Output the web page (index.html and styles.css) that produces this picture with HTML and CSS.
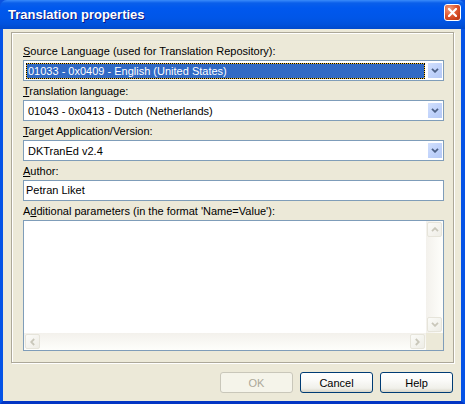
FILE: index.html
```html
<!DOCTYPE html>
<html>
<head>
<meta charset="utf-8">
<link rel="stylesheet" href="styles.css">
</head>
<body>
<div class="window">
  <div class="titlebar">
    <span class="title">Translation properties</span>
    <span class="close">
      <svg width="9" height="9" viewBox="0 0 9 9"><path d="M1 1 L8 8 M8 1 L1 8" stroke="#fff" stroke-width="2.2" stroke-linecap="square"/></svg>
    </span>
  </div>
  <div class="frame">
    <div class="group">
      <div class="label"><u>S</u>ource Language (used for Translation Repository):</div>
      <div class="combo">
        <div class="value"><span class="sel">01033 - 0x0409 - English (United States)</span></div>
        <div class="drop"><svg width="8" height="5" viewBox="0 0 8 5"><path d="M1 0.8 L4 3.8 L7 0.8" fill="none" stroke="#4d6185" stroke-width="1.8"/></svg></div>
      </div>
      <div class="label"><u>T</u>ranslation language:</div>
      <div class="combo">
        <div class="value"><span class="plain">01043 - 0x0413 - Dutch (Netherlands)</span></div>
        <div class="drop"><svg width="8" height="5" viewBox="0 0 8 5"><path d="M1 0.8 L4 3.8 L7 0.8" fill="none" stroke="#4d6185" stroke-width="1.8"/></svg></div>
      </div>
      <div class="label"><u>T</u>arget Application/Version:</div>
      <div class="combo">
        <div class="value"><span class="plain">DKTranEd v2.4</span></div>
        <div class="drop"><svg width="8" height="5" viewBox="0 0 8 5"><path d="M1 0.8 L4 3.8 L7 0.8" fill="none" stroke="#4d6185" stroke-width="1.8"/></svg></div>
      </div>
      <div class="label"><u>A</u>uthor:</div>
      <div class="textbox">Petran Liket</div>
      <div class="label">A<u>d</u>ditional parameters (in the format 'Name=Value'):</div>
      <div class="memo">
        <div class="memo-area"></div>
        <div class="vbar">
          <div class="sbtn"><svg width="8" height="5" viewBox="0 0 8 5"><path d="M1 4.2 L4 1.2 L7 4.2" fill="none" stroke="#c9c7ba" stroke-width="1.8"/></svg></div>
          <div class="vtrack"></div>
          <div class="sbtn"><svg width="8" height="5" viewBox="0 0 8 5"><path d="M1 0.8 L4 3.8 L7 0.8" fill="none" stroke="#c9c7ba" stroke-width="1.8"/></svg></div>
        </div>
        <div class="hbar">
          <div class="sbtn"><svg width="5" height="8" viewBox="0 0 5 8"><path d="M4.2 1 L1.2 4 L4.2 7" fill="none" stroke="#c9c7ba" stroke-width="1.8"/></svg></div>
          <div class="htrack"></div>
          <div class="sbtn"><svg width="5" height="8" viewBox="0 0 5 8"><path d="M0.8 1 L3.8 4 L0.8 7" fill="none" stroke="#c9c7ba" stroke-width="1.8"/></svg></div>
        </div>
        <div class="corner"></div>
      </div>
    </div>
    <div class="buttons">
      <div class="btn disabled">OK</div>
      <div class="btn">Cancel</div>
      <div class="btn">Help</div>
    </div>
  </div>
</div>
</body>
</html>
```
FILE: styles.css
```css
html, body {
  margin: 0;
  padding: 0;
  background: #ffffff;
}
body {
  font-family: "Liberation Sans", Arial, sans-serif;
  font-size: 11px;
  color: #000;
}
.window {
  width: 465px;
  height: 404px;
  display: flex;
  flex-direction: column;
  background: #0a52e0;
}
.titlebar {
  height: 29px;
  box-sizing: border-box;
  display: flex;
  align-items: center;
  justify-content: space-between;
  padding: 0 4px 0 8px;
  border-radius: 7px 7px 0 0;
  background: linear-gradient(#3a8cf8 0, #2a7cf6 1px, #0a5fea 3px, #0058ee 8px, #0056e8 18px, #0052dd 24px, #0049cc 29px);
}
.title {
  color: #fff;
  font-family: "Liberation Sans", Arial, sans-serif;
  font-weight: bold;
  font-size: 13px;
  text-shadow: 1px 1px 0 #0a1883;
  margin-top: -1px;
}
.close {
  width: 17px;
  height: 17px;
  box-sizing: border-box;
  border: 1px solid #fff;
  border-radius: 3px;
  display: flex;
  align-items: center;
  justify-content: center;
  background: radial-gradient(circle at 30% 25%, #f09b7c 0, #e05a32 45%, #c9401b 75%, #b83812 100%);
  margin-top: -4px;
}
.frame {
  flex: 1;
  display: flex;
  flex-direction: column;
  background: #ece9d8;
  border-left: 3px solid #0553e6;
  border-right: 4px solid #0553e6;
  border-bottom: 3px solid #0335c4;
}
.group {
  margin: 3px 7px 0 8px;
  height: 331px;
  box-sizing: border-box;
  border: 1px solid #aca899;
  box-shadow: inset 1px 1px 0 #fff, 1px 1px 0 #fff;
  padding: 12px 9px 0 11px;
  display: flex;
  flex-direction: column;
}
.label {
  height: 13px;
  line-height: 13px;
  margin-bottom: 2px;
  white-space: nowrap;
}
.combo, .textbox {
  height: 21px;
  box-sizing: border-box;
  border: 1px solid #7f9db9;
  background: #fff;
  margin-bottom: 4px;
}
.combo {
  display: flex;
  padding: 1px 0 1px 0;
}
.value {
  flex: 1;
  display: flex;
  align-items: center;
  padding: 0 2px 0 2px;
}
.sel {
  flex: 1;
  height: 16px;
  box-sizing: border-box;
  line-height: 14px;
  padding-left: 1px;
  color: #fff;
  border: 1px dotted #000;
  background: linear-gradient(#316ac5, #316ac5) padding-box, linear-gradient(#f2c33a, #f2c33a) border-box;
  white-space: nowrap;
}
.plain {
  padding-left: 2px;
  white-space: nowrap;
}
.drop {
  width: 16px;
  display: flex;
  align-items: center;
  justify-content: center;
  box-sizing: border-box;
  border: 1px solid #fff;
  border-radius: 1px;
  background: linear-gradient(135deg, #d2e0fd 0, #c1d3fb 50%, #b4c8f5 100%);
}
.textbox {
  line-height: 19px;
  padding-left: 2px;
}
.memo {
  height: 131px;
  box-sizing: border-box;
  border: 1px solid #7f9db9;
  background: #fff;
  display: grid;
  grid-template-columns: 1fr 17px;
  grid-template-rows: 1fr 17px;
}
.vbar {
  display: flex;
  flex-direction: column;
  background: linear-gradient(90deg, #f3f1ec, #fefefb);
}
.hbar {
  display: flex;
  background: linear-gradient(#f3f1ec, #fefefb);
}
.vtrack, .htrack {
  flex: 1;
}
.sbtn {
  width: 15px;
  height: 15px;
  margin: 1px;
  box-sizing: border-box;
  border: 1px solid #e6e4da;
  border-radius: 2px;
  background: linear-gradient(135deg, #fbfbf8, #eeede6);
  display: flex;
  align-items: center;
  justify-content: center;
}
.corner {
  background: #ece9d8;
}
.buttons {
  display: flex;
  justify-content: flex-end;
  gap: 7px;
  margin: 9px 8px 0 0;
}
.btn {
  width: 73px;
  height: 21px;
  box-sizing: border-box;
  border: 1px solid #003c74;
  border-radius: 3px;
  background: linear-gradient(#fff 0, #fafaf8 40%, #f0f0ea 80%, #d8d5c8 100%);
  display: flex;
  align-items: center;
  justify-content: center;
}
.btn.disabled {
  border-color: #c9c7ba;
  background: #f5f4ea;
  color: #aca899;
}
```
